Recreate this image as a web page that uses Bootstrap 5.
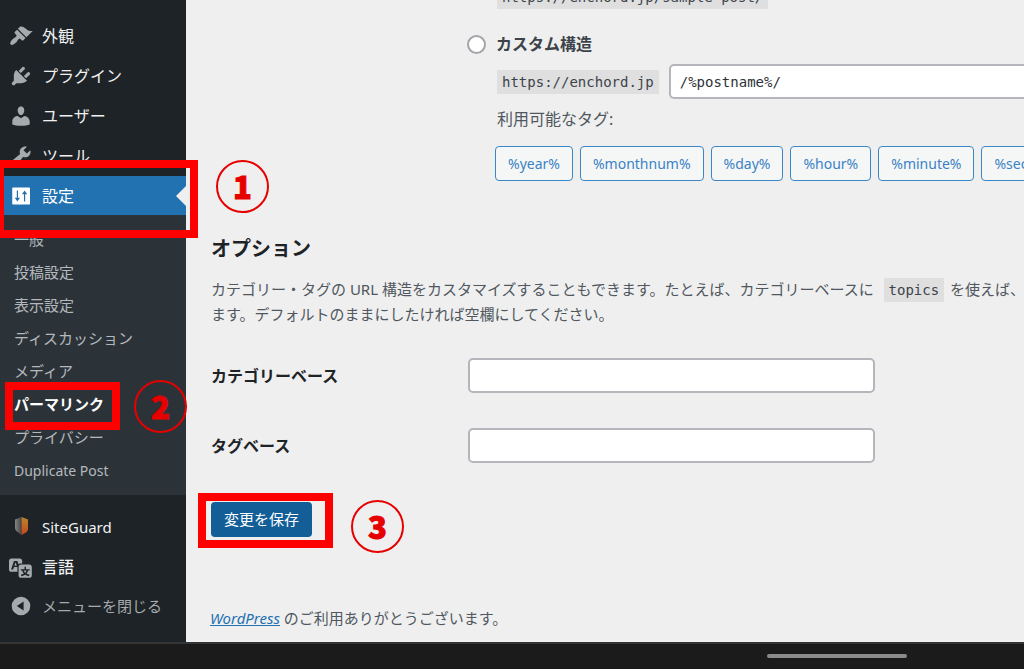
<!DOCTYPE html>
<html lang="ja">
<head>
<meta charset="utf-8">
<meta name="viewport" content="width=device-width, initial-scale=1">
<title>パーマリンク設定</title>
<link href="https://cdn.jsdelivr.net/npm/bootstrap@5.3.0/dist/css/bootstrap.min.css" rel="stylesheet">
<style>
  body { font-family: "Noto Sans", "Noto Sans CJK JP", sans-serif; font-size: 15px; line-height: 24px; color: #50575e; background: #efefef; overflow-x: hidden; }
  .side { width: 186px; background: #1d2327; z-index: 2; padding-top: 16px; }
  .side a, .collapse-btn { text-decoration: none; color: #f0f0f1; }
  .menu-row { height: 40px; padding-left: 9px; gap: 9px; font-size: 16px; line-height: 24px; }
  .menu-row.latin { font-size: 15px; }
  .menu-row svg { width: 24px; height: 24px; flex: none; fill: #a7aaad; }
  .menu-row.current { background: #2271b1; color: #fff; height: 39px; }
  .menu-row.current svg { fill: #fff; }
  .menu-row.current::after { content: ""; margin-left: auto; border: 10px solid transparent; border-right-color: #efefef; border-left: 0; }
  .side .collapse-btn { background: none; border: 0; color: #a7aaad; width: 100%; font-size: 15px; height: 38px; }
  .submenu { background: #2c3338; padding: 8px 0; }
  .submenu li { height: 33px; padding-left: 14px; line-height: 32px; }
  .submenu a { color: #b4b9be; }
  .submenu a.latin { font-size: 14px; }
  .submenu a.active { color: #fff; font-weight: 700; }

  .screen { padding-left: 25px; }
  .field-col { width: 257px; flex: none; }
  .options-block { margin: -15px 0 0 286px; }
  .url { font-family: "DejaVu Sans Mono", monospace; font-size: 14px; line-height: 24px; color: #3c434a; background: #dfdfe0; padding: 0 5px; height: 24px; }
  p .url { display: inline-block; margin: 0 2px 0 6px; }
  .option-row { margin: 23px 0 8px -30px; gap: 10px; color: #3c434a; font-size: 16px; }
  .option-row .form-check-input { width: 19px; height: 19px; border: 2px solid #a2a5aa; margin: 0; }
  .field { height: 35px; border: 2px solid #b5b6bb; border-radius: 5px; padding: 0 9px; background: #fff; }
  .field.base { width: 407px; }
  .field.structure { font-family: "DejaVu Sans Mono", monospace; font-size: 14px; color: #2c3338; width: 480px; flex: none; }
  .structure-line { gap: 10px; }
  .tag-title { font-size: 16px; margin: 8px 0 15px; }
  .tag-list { gap: 7px; margin-left: -2px; }
  .tag-btn { height: 35px; padding: 0 12px; font-size: 14px; line-height: 33px; color: #3b82c4; border: 1px solid #3a86c6; border-radius: 4px; background: #f5f7f7; flex: none; }
  h2 { font-size: 20px; line-height: 28px; font-weight: 700; color: #1d2327; margin: 54px 0 14px; }
  .form-line { height: 35px; margin-bottom: 35px; }
  .form-line label { color: #1d2327; font-weight: 700; font-size: 16px; }
  .save-btn { height: 35px; padding: 0 13px; font-size: 15px; line-height: 35px; color: #fff; background: #135e96; border: 0; border-radius: 4px; }
  .credit { margin: 69px 0 12px -1px; }
  .credit a { color: #2271b1; font-style: italic; }

  /* red annotations drawn over the screen */
  .frame { position: absolute; border: 8px solid #f00; pointer-events: none; z-index: 3; }
  .frame-settings { left: -4px; top: -16px; width: 202px; height: 78px; }
  .frame-permalink { left: 5px; top: -6px; width: 115px; height: 48px; }
  .frame-save { left: -13px; top: -9px; width: 135px; height: 55px; }
  .step { position: absolute; width: 53px; height: 53px; border: 2px solid #e60000; border-radius: 50%; color: #e60000; font: 900 31px/48px "Noto Sans CJK JP", sans-serif; -webkit-text-stroke: 1px #e60000; text-align: center; z-index: 3; }
  .step-one { left: 216px; top: -16px; }
  .step-two { left: 134px; top: -8px; }
  .step-three { left: 140px; top: -2px; }

  .device-bar { height: 28px; background: #1b1b1b; border-top: 2px solid #343434; padding: 0 117px 2px 0; z-index: 4; }
  .home-pill { width: 140px; height: 4px; background: #8b8b8b; }
</style>
</head>
<body>
<div class="d-flex flex-column min-vh-100">
  <div class="d-flex flex-grow-1">
    <nav class="side position-relative flex-shrink-0" aria-label="管理メニュー">
      <ul class="list-unstyled mb-0">
        <li><a href="#" class="menu-row d-flex align-items-center"><svg viewBox="0 0 20 20"><path d="M14.48 11.06L7.41 3.99l1.5-1.5c.5-.56 2.3-.47 3.51.32 1.21.8 1.43 1.28 2.91 2.1 1.18.64 2.45 1.26 4.45.85zm-.71.71L6.7 4.7 4.93 6.47c-.39.39-.39 1.02 0 1.41l1.06 1.06c.39.39.39 1.03 0 1.42-.6.6-1.43 1.11-2.21 1.69-.35.26-.7.53-1.01.84C1.43 14.23.4 16.08 1.4 17.07c.99 1 2.84-.03 4.18-1.36.31-.31.58-.66.85-1.02.57-.78 1.08-1.61 1.69-2.21.39-.39 1.02-.39 1.41 0l1.06 1.06c.39.39 1.02.39 1.41 0z"/></svg>外観</a></li>
        <li><a href="#" class="menu-row d-flex align-items-center"><svg viewBox="0 0 20 20"><path d="M13.11 4.36L9.87 7.6 8 5.73l3.24-3.24c.35-.34 1.05-.2 1.56.32.52.51.66 1.21.31 1.55zm-8 1.77l.91-1.12 9.01 9.01-1.19.84c-.71.71-2.63 1.16-3.82 1.16H6.14L4.9 17.26c-.59.59-1.54.59-2.12 0-.59-.58-.59-1.53 0-2.12l1.24-1.24v-3.88c0-1.13.4-3.19 1.09-3.89zm7.26 3.97l3.24-3.24c.34-.35 1.04-.21 1.55.31.52.51.66 1.21.31 1.55l-3.24 3.25z"/></svg>プラグイン</a></li>
        <li><a href="#" class="menu-row d-flex align-items-center"><svg viewBox="0 0 20 20"><path d="M10 9.25c-2.27 0-2.73-3.44-2.73-3.44C7 4.02 7.82 2 9.97 2c2.16 0 2.98 2.02 2.71 3.81 0 0-.41 3.44-2.68 3.44zm0 2.57L12.72 10c2.39 0 4.52 2.33 4.52 4.53v2.49s-3.65 1.13-7.24 1.13c-3.65 0-7.24-1.13-7.24-1.13v-2.49c0-2.25 1.94-4.48 4.47-4.48z"/></svg>ユーザー</a></li>
        <li><a href="#" class="menu-row d-flex align-items-center"><svg viewBox="0 0 20 20"><path d="M16.68 9.77c-1.34 1.34-3.3 1.67-4.95.99l-5.41 6.52c-.99.99-2.59.99-3.58 0s-.99-2.59 0-3.57l6.52-5.42c-.68-1.65-.35-3.61.99-4.95 1.28-1.28 3.12-1.62 4.72-1.06l-2.89 2.89 2.82 2.82 2.86-2.87c.53 1.58.18 3.39-1.08 4.65zM3.81 16.21c.4.39 1.04.39 1.43 0 .4-.4.4-1.04 0-1.43-.39-.4-1.03-.4-1.43 0-.39.39-.39 1.03 0 1.43z"/></svg>ツール</a></li>
        <li class="position-relative">
          <a href="#" class="menu-row current d-flex align-items-center"><svg viewBox="0 0 20 20"><path fill-rule="evenodd" d="M3.3 3h13.6q.6 0 .6.6v12.8q0 .6-.6.6H3.3q-.6 0-.6-.6V3.6q0-.6.6-.6zM6.5 5.500v6H4.800L7 14.600l2.200-3.100H7.500v-6zM12.500 14.500v-6h-1.700L13 5.400l2.200 3.100h-1.700v6z"/></svg>設定</a>
          <span class="frame frame-settings"></span>
          <span class="step step-one">1</span>
          <ul class="submenu list-unstyled">
            <li><a href="#">一般</a></li>
            <li><a href="#">投稿設定</a></li>
            <li><a href="#">表示設定</a></li>
            <li><a href="#">ディスカッション</a></li>
            <li><a href="#">メディア</a></li>
            <li class="position-relative"><a href="#" class="active">パーマリンク</a><span class="frame frame-permalink"></span><span class="step step-two">2</span></li>
            <li><a href="#">プライバシー</a></li>
            <li><a href="#" class="latin">Duplicate Post</a></li>
          </ul>
        </li>
      </ul>
      <ul class="list-unstyled mb-0 mt-2 pt-1">
        <li><a href="#" class="menu-row latin d-flex align-items-center"><svg viewBox="0 0 24 24">
          <defs><linearGradient id="steel" x2="1"><stop stop-color="#858585"/><stop offset="1" stop-color="#454545"/></linearGradient><linearGradient id="flame" x2="0" y2="1"><stop stop-color="#b9852c"/><stop offset="1" stop-color="#c6471c"/></linearGradient></defs>
          <path fill="url(#steel)" d="M6 4.500L12.500 2v18L8 16.500Q6 15 6 13z"/><path fill="url(#flame)" d="M12.500 2L19 4.500V14q0 2-2 3.500L12.500 20z"/></svg>SiteGuard</a></li>
        <li><a href="#" class="menu-row d-flex align-items-center fw-medium"><svg viewBox="0 0 20 20"><path d="M11 7H9.490c-.63 0-1.250.3-1.590.7L7 5H4.130l-2.390 7h1.690l.74-2H7v4H2c-1.100 0-2-.9-2-2V5c0-1.100.9-2 2-2h7c1.100 0 2 .9 2 2v2zM6.510 9H4.490l1-2.930zM10 8h7c1.100 0 2 .9 2 2v7c0 1.100-.9 2-2 2h-7c-1.100 0-2-.9-2-2v-7c0-1.100.9-2 2-2zm7.250 5v-1.080h-3.170V9.750h-1.160v2.170H9.750V13h1.280c.11.85.56 1.850 1.280 2.620-.87.36-1.890.62-2.310.62-.01.02.22.97.2 1.460.84 0 2.210-.5 3.280-1.150 1.090.65 2.480 1.150 3.340 1.150-.02-.49.2-1.440.2-1.460-.43 0-1.490-.27-2.380-.63.7-.77 1.140-1.770 1.250-2.610h1.360zm-3.810 1.930c-.5-.46-.85-1.130-1.010-1.930h2.090c-.17.8-.51 1.470-1 1.930l-.04.03s-.03-.02-.04-.03z"/></svg>言語</a></li>
        <li><button type="button" class="collapse-btn menu-row d-flex align-items-center"><svg viewBox="0 0 24 24"><path fill-rule="evenodd" d="M12 2.700a9.300 9.300 0 1 0 0 18.600a9.300 9.300 0 1 0 0-18.600zM14.600 7.500v9L7.800 12z"/></svg>メニューを閉じる</button></li>
      </ul>
    </nav>

    <main class="screen flex-grow-1 overflow-hidden text-nowrap">
      <form>
        <div class="options-block">
          <div class="d-flex"><span class="url">https://enchord.jp/sample-post/</span></div>
          <div class="option-row d-flex align-items-center">
            <input class="form-check-input" type="radio" name="structure" id="custom">
            <label for="custom" class="fw-bold">カスタム構造</label>
          </div>
          <div class="structure-line d-flex align-items-center">
            <span class="url">https://enchord.jp</span>
            <input class="field structure" type="text" value="/%postname%/" aria-label="カスタム構造">
          </div>
          <div class="tag-title">利用可能なタグ:</div>
          <div class="tag-list d-flex">
            <button type="button" class="tag-btn">%year%</button>
            <button type="button" class="tag-btn">%monthnum%</button>
            <button type="button" class="tag-btn">%day%</button>
            <button type="button" class="tag-btn">%hour%</button>
            <button type="button" class="tag-btn">%minute%</button>
            <button type="button" class="tag-btn">%second%</button>
          </div>
        </div>

        <h2>オプション</h2>
        <p class="mb-4 pb-2">カテゴリー・タグの URL 構造をカスタマイズすることもできます。たとえば、カテゴリーベースに <code class="url">topics</code> を使えば、<br>ます。デフォルトのままにしたければ空欄にしてください。</p>

        <div class="form-line d-flex align-items-center">
          <label class="field-col" for="category">カテゴリーベース</label>
          <input class="field base" type="text" id="category">
        </div>
        <div class="form-line d-flex align-items-center">
          <label class="field-col" for="tag">タグベース</label>
          <input class="field base" type="text" id="tag">
        </div>
        <div class="position-relative pt-1">
          <div class="position-relative d-inline-block">
            <button type="submit" class="save-btn d-block">変更を保存</button>
            <span class="frame frame-save"></span>
            <span class="step step-three">3</span>
          </div>
        </div>
      </form>
      <footer class="credit"><a href="#">WordPress</a> のご利用ありがとうございます。</footer>
    </main>
  </div>
  <div class="device-bar d-flex align-items-center justify-content-end"><div class="home-pill rounded-pill"></div></div>
</div>
<script src="https://cdn.jsdelivr.net/npm/bootstrap@5.3.0/dist/js/bootstrap.bundle.min.js"></script>
</body>
</html>
